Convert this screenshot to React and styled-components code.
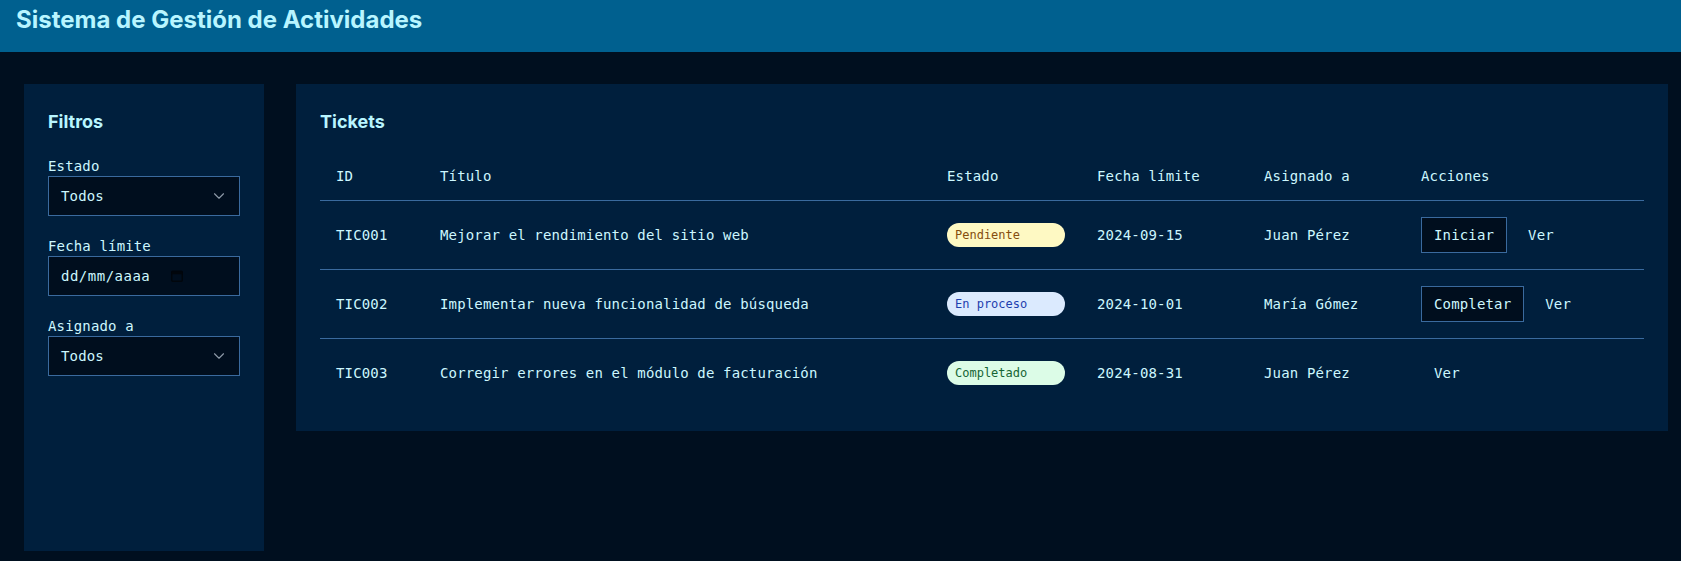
import React from "react";
import styled, { createGlobalStyle } from "styled-components";
import { ChevronDown } from "lucide-react";

const GlobalStyle = createGlobalStyle`
  html, body {
    margin: 0;
    padding: 0;
    background: #000f1f;
  }
  body {
    font-family: "DejaVu Sans Mono", "Liberation Mono", monospace;
    color: #cdf7ff;
    font-size: 14px;
  }
  * {
    box-sizing: border-box;
  }
`;

const mono = `"DejaVu Sans Mono", "Liberation Mono", monospace`;
const heading = `Inter, "Liberation Sans", sans-serif`;

const Page = styled.div`
  min-height: 100vh;
  display: flex;
  flex-direction: column;
`;

const Header = styled.header`
  height: 52px;
  background: #00608f;
  padding: 0 16px;
  flex-shrink: 0;
`;

const Title = styled.h1`
  margin: 0;
  font-family: ${heading};
  font-weight: 700;
  font-size: 24px;
  line-height: 40px;
  letter-spacing: 0;
  color: #b8f5ff;
`;

const Layout = styled.div`
  flex: 1;
  display: flex;
  align-items: flex-start;
  gap: 32px;
  padding: 32px 13px 10px 24px;
`;

const Sidebar = styled.aside`
  width: 240px;
  flex-shrink: 0;
  align-self: stretch;
  background: #001f3d;
  padding: 24px;
`;

const Panel = styled.section`
  flex: 1;
  background: #001f3d;
  padding: 24px;
`;

const SectionTitle = styled.h2`
  margin: 0 0 ${(p) => p.$gap || 16}px;
  font-family: ${heading};
  font-weight: 700;
  font-size: 18px;
  line-height: 28px;
  color: #b8f5ff;
`;

const FilterList = styled.div`
  display: flex;
  flex-direction: column;
  gap: 20px;
`;

const Field = styled.label`
  display: flex;
  flex-direction: column;
`;

const FieldLabel = styled.span`
  font-size: 14px;
  line-height: 20px;
  letter-spacing: 0.15px;
`;

const Control = styled.div`
  height: 40px;
  display: flex;
  align-items: center;
  justify-content: ${(p) => (p.$spread ? "space-between" : "flex-start")};
  padding: 0 11px 0 12px;
  background: #000e1e;
  border: 1px solid #3a6a9e;
  font-family: ${mono};
  font-size: 14px;
  letter-spacing: 0.15px;
  color: #cdf7ff;
`;

const DateText = styled.span`
  letter-spacing: 0.5px;
`;

const CalendarIcon = styled.svg`
  margin-left: 21px;
  flex-shrink: 0;
`;

const Chevron = styled(ChevronDown)`
  color: #8d9aa8;
`;

const Table = styled.table`
  width: 100%;
  border-collapse: collapse;
  font-family: ${mono};
  font-size: 14px;
  letter-spacing: 0.15px;
`;

const Th = styled.th`
  text-align: left;
  font-weight: 400;
  padding: 12px 16px;
  line-height: 24px;
`;

const HeadRow = styled.tr`
  border-bottom: 1px solid #3a6a9e;
`;

const Row = styled.tr`
  border-bottom: ${(p) => (p.$last ? "none" : "1px solid #3a6a9e")};
`;

const Td = styled.td`
  padding: 16px;
  height: 68px;
  line-height: 20px;
  vertical-align: middle;
`;

const badgeColors = {
  Pendiente: { bg: "#fef9c3", fg: "#854d0e" },
  "En proceso": { bg: "#dbeafe", fg: "#1e40af" },
  Completado: { bg: "#dcfce7", fg: "#166534" },
};

const Badge = styled.span`
  display: block;
  padding: 4px 8px;
  border-radius: 12px;
  font-size: 12px;
  line-height: 16px;
  letter-spacing: 0;
  background: ${(p) => badgeColors[p.$status].bg};
  color: ${(p) => badgeColors[p.$status].fg};
`;

const Actions = styled.div`
  display: flex;
  gap: 8px;
`;

const Button = styled.button`
  height: 36px;
  padding: 0 12px;
  font-family: ${mono};
  font-size: 14px;
  letter-spacing: 0.15px;
  color: #cdf7ff;
  background: ${(p) => (p.$ghost ? "transparent" : "#000e1e")};
  border: 1px solid ${(p) => (p.$ghost ? "transparent" : "#3a6a9e")};
  cursor: pointer;
`;

const tickets = [
  {
    id: "TIC001",
    title: "Mejorar el rendimiento del sitio web",
    status: "Pendiente",
    due: "2024-09-15",
    assignee: "Juan Pérez",
    action: "Iniciar",
  },
  {
    id: "TIC002",
    title: "Implementar nueva funcionalidad de búsqueda",
    status: "En proceso",
    due: "2024-10-01",
    assignee: "María Gómez",
    action: "Completar",
  },
  {
    id: "TIC003",
    title: "Corregir errores en el módulo de facturación",
    status: "Completado",
    due: "2024-08-31",
    assignee: "Juan Pérez",
    action: null,
  },
];

const columns = [104, 507, 150, 167, 157, 239];

const App = () => {
  return (
    <Page>
      <GlobalStyle />
      <Header>
        <Title>Sistema de Gestión de Actividades</Title>
      </Header>
      <Layout>
        <Sidebar>
          <SectionTitle $gap={20}>Filtros</SectionTitle>
          <FilterList>
            <Field>
              <FieldLabel>Estado</FieldLabel>
              <Control $spread>
                <span>Todos</span>
                <Chevron size={18} strokeWidth={1.5} />
              </Control>
            </Field>
            <Field>
              <FieldLabel>Fecha límite</FieldLabel>
              <Control>
                <DateText>dd/mm/aaaa</DateText>
                <CalendarIcon width="12" height="12" viewBox="0 0 12 12">
                  <rect x="0.75" y="1.25" width="10.5" height="10" rx="1" fill="none" stroke="#01060c" strokeWidth="1.5" />
                  <rect x="0.75" y="1.25" width="10.5" height="3" fill="#01060c" />
                </CalendarIcon>
              </Control>
            </Field>
            <Field>
              <FieldLabel>Asignado a</FieldLabel>
              <Control $spread>
                <span>Todos</span>
                <Chevron size={18} strokeWidth={1.5} />
              </Control>
            </Field>
          </FilterList>
        </Sidebar>
        <Panel>
          <SectionTitle>Tickets</SectionTitle>
          <Table>
            <colgroup>
              {columns.map((w, i) => (
                <col key={i} style={{ width: w }} />
              ))}
            </colgroup>
            <thead>
              <HeadRow>
                <Th>ID</Th>
                <Th>Título</Th>
                <Th>Estado</Th>
                <Th>Fecha límite</Th>
                <Th>Asignado a</Th>
                <Th>Acciones</Th>
              </HeadRow>
            </thead>
            <tbody>
              {tickets.map((t, i) => (
                <Row key={t.id} $last={i === tickets.length - 1}>
                  <Td>{t.id}</Td>
                  <Td>{t.title}</Td>
                  <Td>
                    <Badge $status={t.status}>{t.status}</Badge>
                  </Td>
                  <Td>{t.due}</Td>
                  <Td>{t.assignee}</Td>
                  <Td>
                    <Actions>
                      {t.action && <Button>{t.action}</Button>}
                      <Button $ghost>Ver</Button>
                    </Actions>
                  </Td>
                </Row>
              ))}
            </tbody>
          </Table>
        </Panel>
      </Layout>
    </Page>
  );
};

export default App;
